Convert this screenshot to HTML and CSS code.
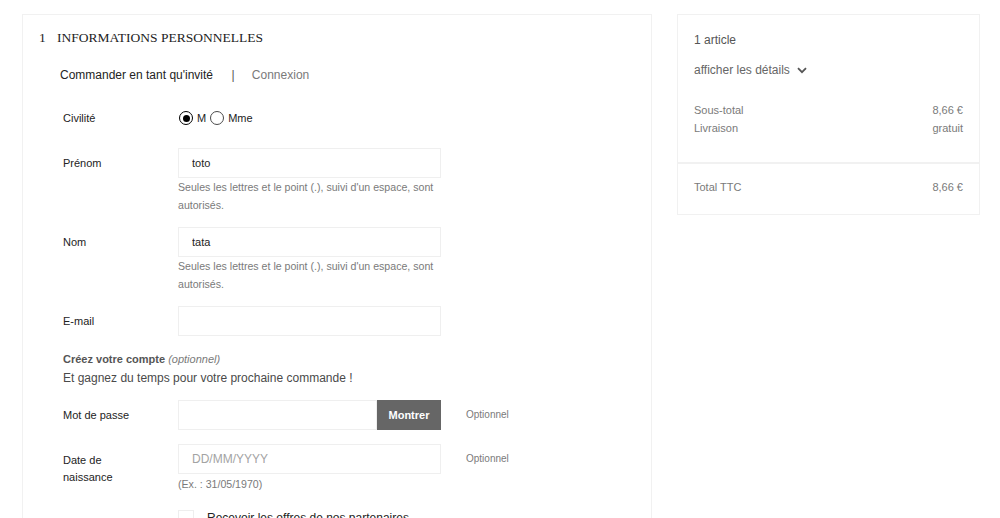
FILE: index.html
```html
<!DOCTYPE html>
<html lang="fr">

<head>
  <meta charset="UTF-8">
  <meta name="viewport" content="width=device-width, initial-scale=1.0">
  <title>Commande</title>
  <link rel="stylesheet" href="styles.css">
</head>

<body>
  <div class="checkout">
    <section class="step">
      <h1 class="step-title"><span class="step-number">1</span>Informations personnelles</h1>

      <nav class="step-nav">
        <span class="nav-active">Commander en tant qu'invité</span>
        <span class="nav-sep">|</span>
        <span class="nav-link">Connexion</span>
      </nav>

      <form class="form">
        <div class="row row-radio">
          <label class="label">Civilité</label>
          <div class="field radios">
            <span class="radio checked"></span><span class="radio-text">M</span>
            <span class="radio"></span><span class="radio-text">Mme</span>
          </div>
        </div>

        <div class="row">
          <label class="label">Prénom</label>
          <div class="field">
            <input class="input" type="text" value="toto">
            <p class="help">Seules les lettres et le point (.), suivi d'un espace, sont autorisés.</p>
          </div>
        </div>

        <div class="row">
          <label class="label">Nom</label>
          <div class="field">
            <input class="input" type="text" value="tata">
            <p class="help">Seules les lettres et le point (.), suivi d'un espace, sont autorisés.</p>
          </div>
        </div>

        <div class="row row-wide">
          <label class="label">E-mail</label>
          <div class="field">
            <input class="input" type="text">
          </div>
        </div>

        <div class="account">
          <p class="account-title">Créez votre compte <em>(optionnel)</em></p>
          <p class="account-text">Et gagnez du temps pour votre prochaine commande !</p>
        </div>

        <div class="row row-wide">
          <label class="label">Mot de passe</label>
          <div class="field">
            <div class="input-group">
              <input class="input" type="password">
              <button type="button" class="btn-show">Montrer</button>
            </div>
          </div>
          <span class="optional">Optionnel</span>
        </div>

        <div class="row row-wide">
          <label class="label label-two">Date de<br>naissance</label>
          <div class="field">
            <input class="input" type="text" placeholder="DD/MM/YYYY">
            <p class="help help-example">(Ex. : 31/05/1970)</p>
          </div>
          <span class="optional">Optionnel</span>
        </div>

        <div class="row">
          <span class="label"></span>
          <div class="field check">
            <span class="checkbox"></span>
            <span class="check-text">Recevoir les offres de nos partenaires</span>
          </div>
        </div>
      </form>
    </section>

    <aside class="summary">
      <div class="summary-top">
        <p class="count">1 article</p>
        <p class="details">afficher les détails
          <svg width="10" height="7" viewBox="0 0 10 7"><path d="M1 1.2l4 4 4-4" fill="none" stroke="#555" stroke-width="1.8"/></svg>
        </p>
        <div class="line"><span>Sous-total</span><span>8,66 €</span></div>
        <div class="line"><span>Livraison</span><span>gratuit</span></div>
      </div>
      <div class="summary-total">
        <div class="line"><span>Total TTC</span><span>8,66 €</span></div>
      </div>
    </aside>
  </div>
</body>

</html>
```

FILE: styles.css
```css
body {
  margin: 0;
  background: #fff;
  font-family: 'Liberation Sans', Arial, sans-serif;
  color: #232323;
  overflow: hidden;
}

p {
  margin: 0;
}

.checkout {
  display: flex;
  align-items: flex-start;
  gap: 25px;
  padding: 14px 20px 0 22px;
}

.step {
  width: 630px;
  height: 560px;
  box-sizing: border-box;
  border: 1px solid #f1f1f1;
  padding: 16px 0 0 16px;
}

.step-title {
  margin: 0;
  font-family: 'Liberation Serif', serif;
  font-weight: normal;
  font-size: 13.5px;
  line-height: 14px;
  text-transform: uppercase;
  color: #232323;
}

.step-number {
  display: inline-block;
  width: 18px;
}

.step-nav {
  margin: 21px 0 0 21px;
  font-size: 12px;
  line-height: 18px;
}

.nav-active {
  color: #232323;
}

.nav-sep {
  margin: 0 14px 0 15px;
  color: #555;
}

.nav-link {
  color: #7a7a7a;
}

.form {
  margin: 19px 0 0 24px;
}

.row {
  display: flex;
  align-items: flex-start;
  margin-bottom: 13px;
}

.row-wide {
  margin-bottom: 14px;
}

.row-radio {
  margin-bottom: 15px;
}

.label {
  width: 115px;
  flex-shrink: 0;
  padding-top: 6px;
  font-size: 11px;
  line-height: 18px;
  color: #232323;
}

.label-two {
  padding-top: 8px;
  line-height: 17px;
}

.field {
  width: 263px;
}

.radios {
  display: flex;
  align-items: center;
  height: 30px;
}

.radio {
  width: 12px;
  height: 12px;
  border: 1.5px solid #4a4a4a;
  border-radius: 50%;
  margin: 0 4px 0 1px;
  position: relative;
}

.radio.checked {
  border-color: #000;
}

.radio.checked::after {
  content: '';
  position: absolute;
  left: 2.5px;
  top: 2.5px;
  width: 7px;
  height: 7px;
  border-radius: 50%;
  background: #000;
}

.radio-text {
  font-size: 11px;
  margin-right: 3px;
}

.input {
  display: block;
  width: 100%;
  height: 30px;
  box-sizing: border-box;
  border: 1px solid #efefef;
  padding: 0 13px;
  font-family: inherit;
  font-size: 11px;
  color: #232323;
  outline: none;
}

.input::placeholder {
  color: #a3a3a3;
  font-size: 12px;
}

.help {
  font-size: 10.6px;
  line-height: 18px;
  color: #7a7a7a;
}

.help-example {
  padding-top: 1px;
}

.account {
  margin-bottom: 12px;
}

.account-title {
  font-size: 11px;
  font-weight: bold;
  line-height: 18px;
  color: #555;
}

.account-title em {
  font-weight: normal;
  color: #7a7a7a;
}

.account-text {
  font-size: 12px;
  line-height: 20px;
  color: #4a4a4a;
}

.input-group {
  display: flex;
}

.input-group .input {
  flex: 1;
}

.btn-show {
  width: 64px;
  height: 30px;
  border: none;
  background: #666;
  color: #fff;
  font-family: inherit;
  font-size: 11px;
  font-weight: bold;
}

.optional {
  margin-left: 25px;
  padding-top: 7px;
  font-size: 10px;
  line-height: 16px;
  color: #7a7a7a;
}

.check {
  display: flex;
  align-items: center;
  padding-top: 3px;
}

.checkbox {
  width: 14px;
  height: 14px;
  border: 1px solid #eee;
  margin-right: 13px;
}

.check-text {
  font-size: 12px;
  color: #232323;
}

.summary {
  width: 303px;
  box-sizing: border-box;
  border: 1px solid #f1f1f1;
  font-size: 11px;
  color: #7a7a7a;
}

.summary-top {
  padding: 15px 16px 25px 16px;
  border-bottom: 2px solid #f1f1f1;
}

.count {
  font-size: 12px;
  line-height: 20px;
  color: #555;
}

.details {
  margin: 10px 0 21px;
  font-size: 12px;
  line-height: 20px;
  color: #666;
  display: flex;
  align-items: center;
  gap: 7px;
}

.line {
  display: flex;
  justify-content: space-between;
  line-height: 18px;
}

.summary-total {
  padding: 14px 16px 18px 16px;
}
```
